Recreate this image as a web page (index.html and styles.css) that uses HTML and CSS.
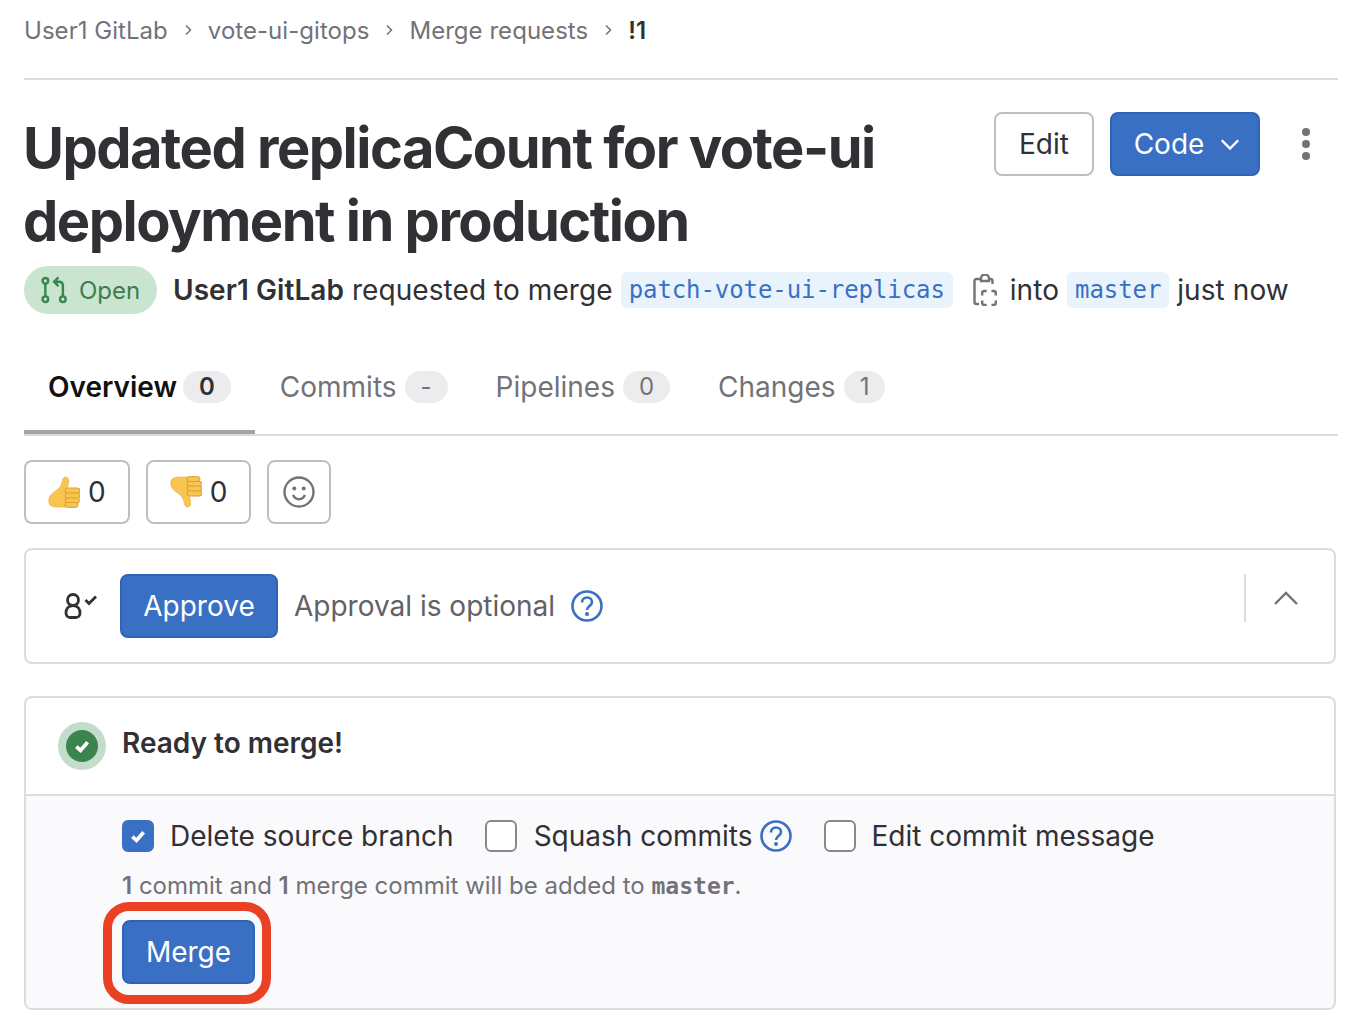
FILE: index.html
```html
<!DOCTYPE html>
<html lang="en">
<head>
<meta charset="UTF-8" />
<meta name="viewport" content="width=device-width, initial-scale=1" />
<title>Merge request !1</title>
<link rel="stylesheet" href="styles.css">
</head>
<body>
<nav class="breadcrumbs">
    <a>User1 GitLab</a>
    <svg class="crumb-sep" viewBox="0 0 16 16"><path d="M6 3.5 10.5 8 6 12.5"/></svg>
    <a>vote-ui-gitops</a>
    <svg class="crumb-sep" viewBox="0 0 16 16"><path d="M6 3.5 10.5 8 6 12.5"/></svg>
    <a>Merge requests</a>
    <svg class="crumb-sep" viewBox="0 0 16 16"><path d="M6 3.5 10.5 8 6 12.5"/></svg>
    <b>!1</b>
</nav>

<header class="title-row">
    <h1>Updated replicaCount for vote-ui deployment in production</h1>
    <div class="title-actions">
        <button class="btn btn-edit">Edit</button>
        <button class="btn btn-primary btn-code">Code
            <svg class="chev" viewBox="0 0 16 16"><path d="M2.500 5.500 8 11l5.500-5.500"/></svg>
        </button>
        <svg class="kebab" viewBox="0 0 8 32"><circle cx="4" cy="4" r="4"/><circle cx="4" cy="16" r="4"/><circle cx="4" cy="28" r="4"/></svg>
    </div>
</header>

<div class="meta-row">
    <span class="badge-open">
        <svg viewBox="0 0 32 32" class="mr-icon">
            <circle cx="5" cy="5.5" r="3.2"/><circle cx="5" cy="26.500" r="3.2"/><circle cx="25" cy="26.500" r="3.2"/>
            <path d="M5 9v14M25 23V11c0-3-1.500-4.500-4.500-4.500H15M20 1.500 15 6.500l5 5"/>
        </svg>
        Open
    </span>
    <span class="meta-text"><b>User1 GitLab</b> requested to merge</span>
    <code class="ref">patch-vote-ui-replicas</code>
    <svg class="copy-icon" viewBox="0 0 24 32">
        <path d="M8 5H3.500a2 2 0 0 0-2 2v21a2 2 0 0 0 2 2H6M16 5h1.500a2 2 0 0 1 2 2v3"/>
        <path d="M8 7V4.500a4 4 0 0 1 8 0V7z"/>
        <path d="M9.200 21.500V19a2 2 0 0 1 2-2h2.500M18.500 17h2.300a2 2 0 0 1 2 2v2.500M9.200 26.500V29a2 2 0 0 0 2 2h2.500M18.500 31h2.300a2 2 0 0 0 2-2v-2.500"/>
    </svg>
    <span class="meta-text">into</span>
    <code class="ref">master</code>
    <span class="meta-text">just now</span>
</div>

<div class="tabs">
    <a class="tab active">Overview <span class="count">0</span></a>
    <a class="tab">Commits <span class="count">-</span></a>
    <a class="tab">Pipelines <span class="count">0</span></a>
    <a class="tab">Changes <span class="count">1</span></a>
</div>

<div class="reactions">
    <button class="btn react">
        <svg class="emoji" viewBox="0 0 32 32">
            <path class="hand" d="M20 31H9C5 31 1 30 .8 25.500.6 21 3 18 7 15.500c4-2.500 6-5 7-9 .6-3 1-5.500 3.500-5.500 3 0 3.500 3 3 6-.3 2-1 4-1.500 6l3 12z"/>
            <rect class="finger" x="17" y="12" width="15" height="5.500" rx="2.700"/>
            <rect class="finger" x="17" y="17" width="15" height="5.500" rx="2.700"/>
            <rect class="finger" x="17" y="22" width="14.500" height="5" rx="2.500"/>
            <rect class="finger" x="17" y="26.500" width="13" height="4.800" rx="2.400"/>
        </svg>
        0
    </button>
    <button class="btn react">
        <svg class="emoji emoji-down" viewBox="0 0 32 32">
            <path class="hand" d="M20 31H9C5 31 1 30 .8 25.500.6 21 3 18 7 15.500c4-2.500 6-5 7-9 .6-3 1-5.500 3.500-5.500 3 0 3.500 3 3 6-.3 2-1 4-1.500 6l3 12z"/>
            <rect class="finger" x="17" y="12" width="15" height="5.500" rx="2.700"/>
            <rect class="finger" x="17" y="17" width="15" height="5.500" rx="2.700"/>
            <rect class="finger" x="17" y="22" width="14.500" height="5" rx="2.500"/>
            <rect class="finger" x="17" y="26.500" width="13" height="4.800" rx="2.400"/>
        </svg>
        0
    </button>
    <button class="btn react react-add">
        <svg class="smile" viewBox="0 0 32 32">
            <circle cx="16" cy="16" r="14.500"/>
            <path d="M10 19c1.500 3 3.500 4.200 6 4.200s4.500-1.200 6-4.200"/>
            <circle class="dot" cx="11.300" cy="12.500" r="2"/><circle class="dot" cx="20.700" cy="12.500" r="2"/>
        </svg>
    </button>
</div>

<section class="card approvals">
    <span class="approver-icon">
        <svg viewBox="0 0 34 26">
            <circle cx="9" cy="7" r="5.500"/>
            <path d="M9 12.500c-4.500 0-7 3.500-7 7.500 0 2.500 1.500 4.500 4 4.500h6c2.500 0 4-2 4-4.500 0-4-2.500-7.500-7-7.500z"/>
            <path d="M21.500 7l3.500 3.500 7-7"/>
        </svg>
    </span>
    <button class="btn btn-primary btn-approve">Approve</button>
    <span class="approval-note">Approval is optional</span>
    <svg class="help" viewBox="0 0 32 32">
        <circle cx="16" cy="16" r="14.500"/>
        <path d="M11 12.500c0-3 2.200-5 5-5s5 2 5 4.500c0 4-5 4-5 8"/>
        <circle class="dot" cx="16" cy="24" r="2"/>
    </svg>
    <div class="collapse">
        <svg viewBox="0 0 26 16"><path d="M2 14 13 3l11 11"/></svg>
    </div>
</section>

<section class="card merge-card">
    <div class="merge-head">
        <span class="status-ring"><span class="status-dot">
            <svg viewBox="0 0 16 16"><path d="M3.500 8.500 6.800 11.500 12.500 5"/></svg>
        </span></span>
        <strong>Ready to merge!</strong>
    </div>
    <div class="merge-body">
        <div class="options">
            <label class="opt opt-first"><span class="box checked"><svg viewBox="0 0 16 16"><path d="M3.500 8.500 6.800 11.500 12.500 5"/></svg></span>Delete source branch</label>
            <label class="opt opt-squash"><span class="box"></span>Squash commits
                <svg class="help help-sm" viewBox="0 0 32 32">
                    <circle cx="16" cy="16" r="14.500"/>
                    <path d="M11 12.500c0-3 2.200-5 5-5s5 2 5 4.500c0 4-5 4-5 8"/>
                    <circle class="dot" cx="16" cy="24" r="2"/>
                </svg>
            </label>
            <label class="opt"><span class="box"></span>Edit commit message</label>
        </div>
        <p class="merge-note"><b>1</b> commit and <b>1</b> merge commit will be added to <code>master</code>.</p>
        <div class="merge-action">
            <button class="btn btn-primary">Merge</button>
            <span class="highlight"></span>
        </div>
    </div>
</section>
</body>
</html>
```

FILE: styles.css
```css
* {
    box-sizing: border-box;
}

body {
    margin: 0;
    padding: 0 28px 0 24px;
    background: #fff;
    color: #303035;
    font-family: Inter, "Liberation Sans", sans-serif;
    font-size: 28px;
    overflow: hidden;
}

svg {
    display: block;
    flex: none;
}

.breadcrumbs {
    display: flex;
    align-items: center;
    height: 80px;
    padding-bottom: 18px;
    border-bottom: 2px solid #dcdcde;
    font-size: 24px;
    letter-spacing: 0.04px;
    color: #737278;
}

.breadcrumbs b {
    color: #303035;
    font-weight: 600;
}

.crumb-sep {
    width: 16px;
    height: 16px;
    margin: 0 12px 0 12px;
    fill: none;
    stroke: #737278;
    stroke-width: 1.500;
}

.title-row {
    display: flex;
    justify-content: space-between;
    align-items: flex-start;
    padding-top: 32px;
}

h1 {
    margin: 0 0 0 -1px;
    width: 900px;
    font-size: 56px;
    line-height: 73px;
    font-weight: 700;
    color: #303035;
    letter-spacing: -1.5px;
}

.title-actions {
    display: flex;
    align-items: center;
    gap: 16px;
}

.btn {
    display: inline-flex;
    align-items: center;
    justify-content: center;
    height: 64px;
    padding: 0 22px;
    background: #fff;
    border: 2px solid #bfbfc3;
    border-radius: 8px;
    color: #303035;
    font: inherit;
}

.btn-edit {
    width: 100px;
    padding: 0;
}

.btn-primary {
    background: #3a70c4;
    border-color: #2f63b5;
    color: #fff;
}

.btn-code {
    width: 150px;
    gap: 14px;
    padding: 0 16px 0 22px;
}

.chev {
    width: 24px;
    height: 24px;
    fill: none;
    stroke: #fff;
    stroke-width: 1.600;
}

.kebab {
    width: 8px;
    height: 32px;
    margin: 0 28px 0 26px;
    fill: #737278;
}

.meta-row {
    display: flex;
    align-items: center;
    margin-top: 8px;
    height: 48px;
}

.badge-open {
    display: inline-flex;
    align-items: center;
    gap: 10px;
    width: 133px;
    height: 48px;
    padding: 0 0 0 17px;
    margin-right: 16px;
    border-radius: 24px;
    background: #c9e5d0;
    color: #3b7d4f;
    font-size: 24px;
}

.mr-icon {
    width: 28px;
    height: 28px;
    fill: none;
    stroke: #3b8551;
    stroke-width: 2.800;
}

.meta-text {
    letter-spacing: 0.07px;
}

.meta-text b {
    font-weight: 600;
}

.ref {
    margin: 0 8px;
    padding: 0 8px;
    height: 36px;
    line-height: 36px;
    border-radius: 6px;
    background: #e9f3fc;
    color: #3a70c4;
    font-family: "DejaVu Sans Mono", monospace;
    font-size: 24px;
    letter-spacing: -0.08px;
}

.copy-icon {
    width: 24px;
    height: 32px;
    margin: 0 13px 0 12px;
    fill: none;
    stroke: #737278;
    stroke-width: 2.400;
}

.tabs {
    display: flex;
    height: 98px;
    margin-top: 24px;
    border-bottom: 2px solid #dcdcde;
}

.tab {
    display: flex;
    align-items: center;
    gap: 8px;
    height: 96px;
    padding: 6px 24px 0;
    color: #737278;
    border-bottom: 4px solid transparent;
}

.tab.active {
    gap: 6px;
    margin-right: 1px;
    color: #111;
    font-weight: 600;
    border-bottom-color: #a4a3a8;
}

.count {
    display: inline-block;
    height: 32px;
    line-height: 32px;
    padding: 0 16px;
    border-radius: 16px;
    background: #ececef;
    color: #737278;
    font-size: 24px;
    font-weight: 400;
    text-align: center;
}

.active .count {
    color: #303035;
    font-weight: 600;
}

.reactions {
    display: flex;
    gap: 16px;
    margin-top: 24px;
}

.react {
    gap: 8px;
    padding: 0 22px;
}

.emoji {
    width: 32px;
    height: 32px;
}

.emoji-down {
    transform: scaleY(-1);
}

.hand {
    fill: #f8c650;
    stroke: #e5a73a;
    stroke-width: 0.6;
}

.finger {
    fill: #f8c650;
    stroke: #dd9a2c;
    stroke-width: 1;
}

.react-add {
    width: 64px;
    padding: 0;
}

.smile {
    width: 32px;
    height: 32px;
    fill: none;
    stroke: #737278;
    stroke-width: 2.400;
}

.smile .dot,
.help .dot {
    stroke: none;
}

.smile .dot {
    fill: #737278;
}

.card {
    border: 2px solid #dcdcde;
    border-radius: 8px;
    width: 1312px;
}

.approvals {
    display: flex;
    align-items: center;
    height: 116px;
    margin-top: 24px;
    padding-left: 38px;
}

.approver-icon svg {
    width: 34px;
    height: 26px;
    fill: none;
    stroke: #303035;
    stroke-width: 2.800;
}

.approvals .btn {
    margin-left: 22px;
}

.btn-approve {
    width: 158px;
    padding: 0;
}

.approval-note {
    margin-left: 16px;
    color: #626168;
}

.help {
    width: 32px;
    height: 32px;
    margin-left: 16px;
    fill: none;
    stroke: #3a70c4;
    stroke-width: 2.600;
}

.help .dot {
    fill: #3a70c4;
}

.opt .help-sm {
    margin-left: -10px;
}

.collapse {
    display: flex;
    align-items: center;
    height: 48px;
    width: 66px;
    margin: 0 24px 16px auto;
    padding-left: 27px;
    border-left: 2px solid #dcdcde;
}

.collapse svg {
    width: 26px;
    height: 16px;
    fill: none;
    stroke: #737278;
    stroke-width: 2.400;
}

.merge-card {
    margin-top: 32px;
    height: 314px;
}

.merge-head {
    display: flex;
    align-items: center;
    gap: 16px;
    height: 98px;
    padding-left: 32px;
    border-bottom: 2px solid #dcdcde;
}

.merge-head strong {
    margin-bottom: 6px;
    font-weight: 600;
}

.status-ring {
    display: flex;
    align-items: center;
    justify-content: center;
    width: 48px;
    height: 48px;
    border-radius: 50%;
    background: #c4dccb;
}

.status-dot {
    display: flex;
    align-items: center;
    justify-content: center;
    width: 32px;
    height: 32px;
    border-radius: 50%;
    background: #3c844e;
}

.status-dot svg,
.box svg {
    width: 20px;
    height: 20px;
    fill: none;
    stroke: #fff;
    stroke-width: 3;
}

.merge-body {
    height: 212px;
    padding: 23px 0 0 96px;
    background: #fafafc;
    border-radius: 0 0 6px 6px;
}

.options {
    display: flex;
    align-items: center;
    gap: 32px;
    height: 34px;
}

.opt {
    display: flex;
    align-items: center;
    gap: 16px;
}

.opt-first {
    margin-right: -1px;
}

.opt-squash {
    gap: 17px;
}

.merge-note {
    margin: 16px 0 0;
    font-size: 24px;
    line-height: 34px;
    color: #737278;
}

.merge-note b {
    font-weight: 600;
}

.merge-note code {
    font-family: "DejaVu Sans Mono", monospace;
    font-size: 23px;
    font-weight: 700;
}

.box {
    display: flex;
    align-items: center;
    justify-content: center;
    width: 32px;
    height: 32px;
    border: 2px solid #89888d;
    border-radius: 6px;
    background: #fff;
}

.box.checked {
    background: #3a70c4;
    border-color: #3a70c4;
}

.merge-action {
    position: relative;
    display: inline-block;
    margin-top: 17px;
}

.merge-action .btn {
    width: 133px;
}

.highlight {
    position: absolute;
    top: -18px;
    left: -19px;
    width: 168px;
    height: 102px;
    border: 9px solid #ea4125;
    border-radius: 26px;
}
```
